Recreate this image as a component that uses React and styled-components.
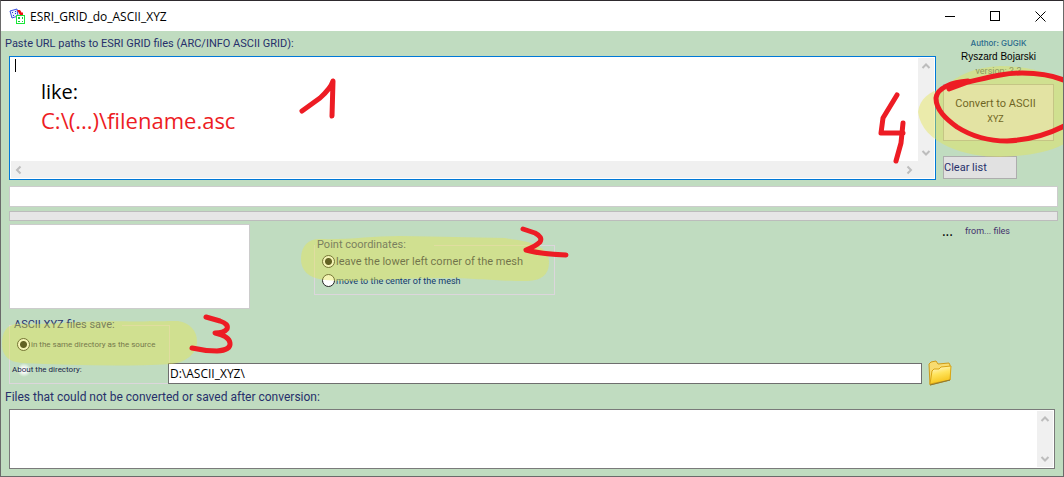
import React from 'react';
import styled, { createGlobalStyle } from 'styled-components';

const GlobalStyle = createGlobalStyle`
  * {
    box-sizing: border-box;
  }

  body {
    margin: 0;
    background: #c0dcc0;
    font-family: Roboto, 'Liberation Sans', sans-serif;
    font-size: 11px;
    color: #27306b;
  }

  button, input, textarea {
    font-family: inherit;
    margin: 0;
  }
`;

const Window = styled.div`
  min-height: 100vh;
  display: flex;
  flex-direction: column;
  border: 1px solid #6a6a6a;
  border-top-color: #2e2a2e;
  background: #c0dcc0;
  overflow: hidden;
`;

const TitleBar = styled.header`
  display: flex;
  align-items: center;
  height: 30px;
  padding-left: 8px;
  background: #ffffff;
`;

const Title = styled.h1`
  flex: 1;
  margin: 0 0 0 4px;
  font-family: 'Open Sans', 'Noto Sans', sans-serif;
  font-size: 12px;
  font-weight: 400;
  color: #000000;
`;

const WindowButton = styled.button`
  width: 45px;
  height: 30px;
  padding: 0;
  border: none;
  background: transparent;
  display: flex;
  align-items: center;
  justify-content: center;

  &:hover {
    background: #e5e5e5;
  }
`;

const Body = styled.main`
  flex: 1;
  display: flex;
  flex-direction: column;
  padding: 0 5px 7px 8px;
`;

const TopRow = styled.section`
  position: relative;
  display: flex;
  gap: 7px;
  padding-right: 4px;
`;

const EditorColumn = styled.div`
  flex: 1;
  min-width: 0;
`;

const FieldLabel = styled.label`
  display: flex;
  align-items: center;
  height: 25px;
  margin-left: -4px;
  font-size: ${({ $size }) => $size || 11}px;
`;

const Frame = styled.div`
  position: relative;
  display: grid;
  grid-template-columns: 1fr 16px;
  grid-template-rows: 1fr;
  grid-auto-rows: 17px;
  height: ${({ $height }) => $height}px;
  padding: 1px;
  border: 1px solid ${({ $focused }) => ($focused ? '#0078d7' : '#7a7a7a')};
  background: #ffffff;
`;

const FailedFrame = styled(Frame)`
  margin-right: 3px;
`;

const TextArea = styled.textarea`
  width: 100%;
  height: 100%;
  min-height: 0;
  padding: 2px 4px;
  border: none;
  outline: none;
  resize: none;
  background: transparent;
  overflow: hidden;
`;

const ScrollBar = styled.div`
  display: flex;
  flex-direction: ${({ $horizontal }) => ($horizontal ? 'row' : 'column')};
  justify-content: space-between;
  background: #f0f0f0;
`;

const HorizontalBar = styled(ScrollBar)`
  grid-column: 1 / 3;
  padding-right: 17px;
`;

const ArrowButton = styled.button`
  width: 16px;
  height: 17px;
  padding: 0;
  border: none;
  background: transparent;
  display: flex;
  align-items: center;
  justify-content: center;
`;

const Caret = styled.span`
  position: absolute;
  top: 2px;
  left: 5px;
  width: 1px;
  height: 13px;
  background: #000000;
`;

const Note = styled.p`
  position: absolute;
  top: 20px;
  left: 31px;
  margin: 0;
  font-family: 'Open Sans', 'Noto Sans', sans-serif;
  font-size: 20px;
  line-height: 29px;
  color: #000000;
  pointer-events: none;

  span {
    display: block;
    font-size: 22px;
    color: #ed1c24;
  }
`;

const Side = styled.aside`
  width: 111px;
  padding-top: 6px;
  text-align: center;
`;

const Author = styled.div`
  font-family: Inter, sans-serif;
  font-size: 8px;
  font-weight: 500;
  line-height: 13px;
  color: #2a6a8c;
`;

const AuthorName = styled.div`
  font-family: 'Liberation Sans', sans-serif;
  font-size: 10px;
  line-height: 14px;
  color: #000000;
`;

const Version = styled.div`
  font-size: 9px;
  line-height: 14px;
  color: #4a5a6a;
`;

const PushButton = styled.button`
  display: block;
  border: 1px solid #adadad;
  background: #e1e1e1;
  color: #27306b;
  font-size: 11px;
`;

const ConvertButton = styled(PushButton)`
  width: 100%;
  height: 57px;
  margin-top: 6px;
  padding: 0 6px 3px 0;
  line-height: 16px;
  color: #100000;

  small {
    display: block;
    font-size: 9px;
    line-height: 14px;
  }
`;

const ClearButton = styled(PushButton)`
  width: 74px;
  height: 23px;
  margin-top: 15px;
  padding: 0;
  text-align: left;
`;

const LineInput = styled.input`
  width: 100%;
  height: 21px;
  margin-top: 6px;
  border: 1px solid #cccccc;
  background: #ffffff;
  outline: none;
`;

const ProgressTrack = styled.div`
  height: 10px;
  margin-top: 4px;
  border: 1px solid #bcbcbc;
  background: #e6e6e6;
`;

const OptionsRow = styled.section`
  display: flex;
  align-items: flex-start;
  margin-top: 3px;
`;

const ListBox = styled.div`
  width: 241px;
  height: 85px;
  border: 1px solid #cccccc;
  background: #ffffff;
`;

const Group = styled.fieldset`
  position: relative;
  width: ${({ $width }) => $width}px;
  min-width: 0;
  margin: 0;
  border: 1px solid #dcd6dc;
`;

const CoordinatesGroup = styled(Group)`
  margin: 15px 0 0 64px;
  padding: 1px 7px 4px;
`;

const SaveGroup = styled(Group)`
  padding: 4px 7px;
`;

const Legend = styled.legend`
  width: ${({ $width }) => $width}px;
  margin-left: ${({ $shift }) => $shift}px;
  padding: 0 2px;
  font-size: 11px;
  line-height: 12px;
  white-space: nowrap;
`;

const Option = styled.label`
  display: flex;
  align-items: center;
  height: 19px;
  font-size: ${({ $size }) => $size}px;
  color: ${({ $color }) => $color || '#181c48'};
  white-space: nowrap;
`;

const Radio = styled.input`
  appearance: none;
  flex: none;
  width: 13px;
  height: 13px;
  margin: 0 1px 0 0;
  border: 1px solid #222222;
  border-radius: 50%;
  background: #ffffff;

  &:checked {
    background: radial-gradient(circle, #000000 3px, #ffffff 4px);
  }
`;

const DirectoryOption = styled(Option)`
  position: relative;
  margin: 6px 0 0 -5px;

  span {
    position: relative;
  }
`;

const FadedRadio = styled.input`
  appearance: none;
  position: absolute;
  left: 5px;
  width: 14px;
  height: 14px;
  margin: 0;
  background: radial-gradient(circle, #ffffff 2px, transparent 7px);
`;

const Counter = styled.div`
  display: flex;
  align-items: center;
  gap: 12px;
  margin-left: auto;
  padding-right: 48px;
  height: 13px;
  font-size: 9px;
  color: #43306b;

  b {
    font-family: 'Open Sans', sans-serif;
    font-size: 14px;
    font-weight: 400;
    line-height: 13px;
    color: #000000;
  }
`;

const SaveRow = styled.section`
  position: relative;
  display: flex;
  align-items: flex-end;
  margin-top: 10px;
  padding-right: 136px;
`;

const PathInput = styled.input`
  position: relative;
  flex: 1;
  min-width: 0;
  height: 21px;
  margin-left: -2px;
  padding: 0 1px;
  border: 1px solid #6e6e6e;
  outline: none;
  background: #ffffff;
  font-family: 'Open Sans', 'Noto Sans', sans-serif;
  font-size: 12px;
  color: #000000;
`;

const FolderButton = styled.button`
  width: 24px;
  height: 26px;
  margin: 0 -30px -2px 6px;
  padding: 0;
  border: none;
  background: transparent;
`;

/* Hand-drawn strokes and marker lying over the form */
const Ink = styled.svg`
  position: absolute;
  top: ${({ $top }) => $top}px;
  left: ${({ $left }) => ($left === undefined ? 'auto' : `${$left}px`)};
  right: ${({ $right }) => ($right === undefined ? 'auto' : `${$right}px`)};
  z-index: 1;
  fill: none;
  stroke: #ed1c24;
  stroke-width: 5;
  stroke-linecap: round;
  stroke-linejoin: round;
  pointer-events: none;

  .marker {
    fill: rgba(229, 229, 80, 0.43);
    stroke: none;
  }
`;

const arrows = {
  up: 'M1.5 6 L5 2.5 L8.5 6',
  down: 'M1.5 3 L5 6.5 L8.5 3',
  left: 'M6.5 1.5 L3 5 L6.5 8.5',
  right: 'M3.5 1.5 L7 5 L3.5 8.5',
};

function Arrow({ direction }) {
  return (
    <ArrowButton type="button" aria-label={`Scroll ${direction}`}>
      <svg width="10" height="10" fill="none" stroke="#bdbdbd" strokeWidth="2">
        <path d={arrows[direction]} />
      </svg>
    </ArrowButton>
  );
}

function AppIcon() {
  return (
    <svg width="17" height="17" viewBox="0 0 17 17">
      <path d="M1 3 L8 1 L9 8 L3 10 Z" fill="#e8ecff" stroke="#3c50e0" />
      <path d="M3 4h1v1h-1zM6 3h1v1h-1zM4 7h1v1h-1zM6 5h1v1h-1z" fill="#2038d0" />
      <path d="M8 2 L11 2 L13 5 L14 4 L14 8 L10 8 L11 7 Z" fill="#f01010" />
      <rect x="7.5" y="7.5" width="8" height="8" fill="#ffffff" stroke="#18e838" />
      <path d="M9 9h2v2H9zM13 9h1v2h-1zM9 13h2v1H9zM13 13h1v1h-1z" fill="#18c838" />
    </svg>
  );
}

function FolderIcon() {
  return (
    <svg width="24" height="26" viewBox="0 0 24 26">
      <defs>
        <linearGradient id="folderFront" x1="0" y1="0" x2="0.3" y2="1">
          <stop offset="0" stopColor="#fffbe0" />
          <stop offset="0.5" stopColor="#ffe45c" />
          <stop offset="1" stopColor="#f6c41c" />
        </linearGradient>
      </defs>
      <path d="M2 25 L1 4 L3 2 L8 1 L10 4 L21 3 L22 5 L22 20 Z" fill="#f8dc70" stroke="#cf9c18" />
      <path d="M2 24 L4 11 L6 9 L11 9 L13 7 L23 6 L22 20 Z" fill="url(#folderFront)" stroke="#d9a514" />
      <path d="M2 25 L22 20" stroke="#8a7838" />
    </svg>
  );
}

export default function App() {
  return (
    <>
      <GlobalStyle />
      <Window>
        <TitleBar>
          <AppIcon />
          <Title>ESRI_GRID_do_ASCII_XYZ</Title>
          <WindowButton type="button" aria-label="Minimize">
            <svg width="11" height="11" stroke="#000">
              <path d="M0 5.5h10" />
            </svg>
          </WindowButton>
          <WindowButton type="button" aria-label="Maximize">
            <svg width="11" height="11" stroke="#000" fill="none">
              <rect x="0.5" y="0.5" width="9" height="9" />
            </svg>
          </WindowButton>
          <WindowButton type="button" aria-label="Close">
            <svg width="11" height="11" stroke="#000">
              <path d="M0.5 0.5 L10.5 10.5 M10.5 0.5 L0.5 10.5" />
            </svg>
          </WindowButton>
        </TitleBar>

        <Body>
          <TopRow>
            <EditorColumn>
              <FieldLabel htmlFor="paths">
                Paste URL paths to ESRI GRID files (ARC/INFO ASCII GRID):
              </FieldLabel>
              <Frame $height={124} $focused>
                <TextArea id="paths" />
                <ScrollBar>
                  <Arrow direction="up" />
                  <Arrow direction="down" />
                </ScrollBar>
                <HorizontalBar $horizontal>
                  <Arrow direction="left" />
                  <Arrow direction="right" />
                </HorizontalBar>
                <Caret />
                <Note>
                  like:
                  <span>C:\(...)\filename.asc</span>
                </Note>
                <Ink $top={18} $left={288} width="42" height="46" viewBox="298 75 42 46">
                  <path d="M302 111 L320 98 Q331 88 333 81 L332 116" />
                </Ink>
              </Frame>
            </EditorColumn>

            <Side>
              <Author>Author: GUGIK</Author>
              <AuthorName>Ryszard Bojarski</AuthorName>
              <Version>version: 3.3</Version>
              <ConvertButton type="button">
                Convert to ASCII
                <small>XYZ</small>
              </ConvertButton>
              <ClearButton type="button">Clear list</ClearButton>
            </Side>

            <Ink $top={29} $right={-6} width="189" height="110" viewBox="875 60 189 110">
              <path
                className="marker"
                d="M918 112 C920 98 930 91 944 88 C958 74 976 67 1000 66 C1024 66 1050 72 1070 84 L1070 140 C1056 151 1030 156 1000 157 C966 157 922 144 918 112 Z"
              />
              <path d="M897 95 L883 118 L881 133 H903 M903 123 L901 143 L896 161" />
              <path d="M949 89 L968 82 C990 77 1004 73 1022 73 C1042 73 1056 76 1068 82" />
              <path d="M968 81 C952 82 937 88 936 98 C936 110 946 119 957 127 C968 134 983 141 1007 141 C1030 140 1050 134 1068 124" />
            </Ink>
          </TopRow>

          <LineInput type="text" aria-label="Current file" />
          <ProgressTrack role="progressbar" aria-label="Progress" />

          <OptionsRow>
            <ListBox />
            <CoordinatesGroup $width={241}>
              <Legend $width={119} $shift={-7}>Point coordinates:</Legend>
              <Option $size={11}>
                <Radio type="radio" name="point" defaultChecked />
                leave the lower left corner of the mesh
              </Option>
              <Option $size={9} $color="#10386c">
                <Radio type="radio" name="point" />
                move to the center of the mesh
              </Option>
              <Ink $top={-26} $left={-18} width="275" height="62" viewBox="297 225 275 62">
                <path
                  className="marker"
                  d="M318 239 C350 240 370 236 400 236 C440 237 470 237 505 238 C520 241 549 242 549 262 C549 276 540 281 525 281 C490 281 480 278 440 278 C390 278 360 283 325 280 C308 278 301 270 301 259 C301 247 307 240 318 239 Z"
                />
                <path d="M523 229 L535 233 Q543 237 540 242 Q536 246 526 250 Q540 254 566 255" />
              </Ink>
            </CoordinatesGroup>
            <Counter>
              <b>...</b>
              <span>from... files</span>
            </Counter>
          </OptionsRow>

          <SaveRow>
            <SaveGroup $width={161}>
              <Legend $width={110} $shift={-5}>ASCII XYZ files save:</Legend>
              <Option $size={8}>
                <Radio type="radio" name="target" defaultChecked />
                in the same directory as the source
              </Option>
              <DirectoryOption $size={8}>
                <FadedRadio type="radio" name="target" />
                <span>About the directory:</span>
              </DirectoryOption>
            </SaveGroup>
            <PathInput type="text" aria-label="Directory" defaultValue="D:\ASCII_XYZ\" />
            <FolderButton type="button" aria-label="Choose directory">
              <FolderIcon />
            </FolderButton>
            <Ink $top={-8} $left={-8} width="240" height="60" viewBox="1 310 240 60">
              <path
                className="marker"
                d="M16 323 C50 324 80 320 110 320 C140 321 160 320 178 320 C190 322 197 330 197 340 C197 353 186 361 172 363 C120 366 70 364 22 362 C8 361 2 354 2 343 C2 332 6 324 16 323 Z"
              />
              <path d="M206 316 L220 320 Q229 323 227 328 Q224 332 215 332 Q229 335 230 342 Q231 349 217 350 Q205 350 192 347" />
            </Ink>
          </SaveRow>

          <FieldLabel htmlFor="failed" $size={12}>
            Files that could not be converted or saved after conversion:
          </FieldLabel>
          <FailedFrame $height={60}>
            <TextArea id="failed" />
            <ScrollBar>
              <Arrow direction="up" />
              <Arrow direction="down" />
            </ScrollBar>
          </FailedFrame>
        </Body>
      </Window>
    </>
  );
}
